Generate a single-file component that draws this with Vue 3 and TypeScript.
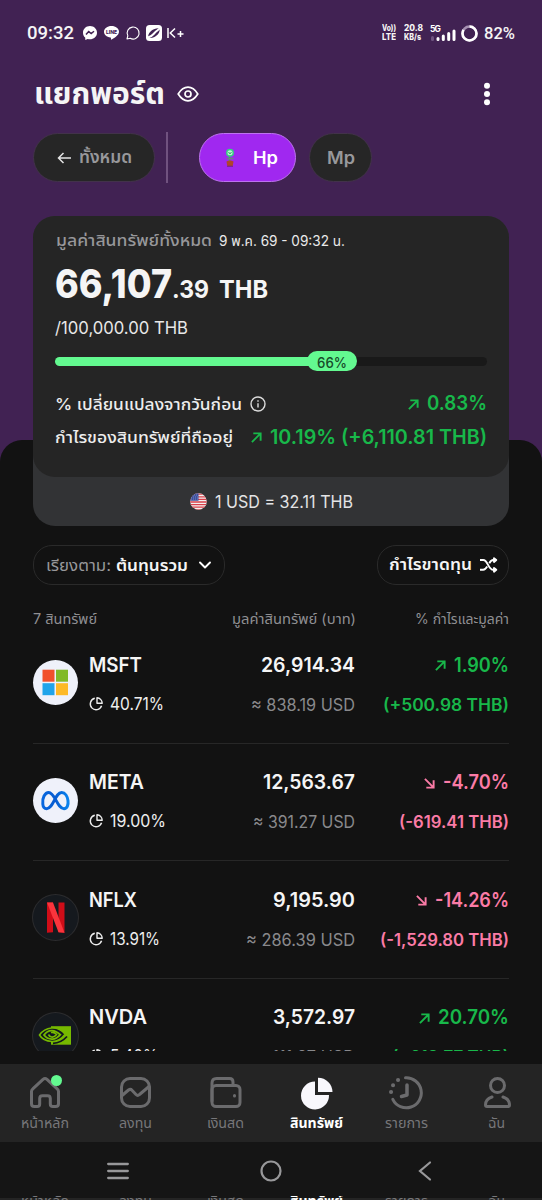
<script setup lang="ts">
import type { Directive } from 'vue'

interface Asset {
  symbol: string
  symbolW: number
  share: string
  shareW: number
  value: string
  valueW: number
  usd: string
  usdW: number
  change: string
  changeW: number
  profit: string
  profitW: number
  up: boolean
}

interface Tab {
  id: string
  label: string
  width: number
}

// Condenses or widens a label so that it fills exactly the given width.
const vFit: Directive<HTMLElement, number> = {
  mounted(el, { value }) {
    const natural = el.getBoundingClientRect().width
    if (!natural) return
    el.style.transform = `scaleX(${value / natural})`
    el.style.marginRight = `${value - natural}px`
  },
}

const assets: Asset[] = [
  { symbol: 'MSFT', symbolW: 53, share: '40.71%', shareW: 54, value: '26,914.34', valueW: 94, usd: '≈ 838.19 USD', usdW: 104, change: '1.90%', changeW: 55, profit: '(+500.98 THB)', profitW: 126, up: true },
  { symbol: 'META', symbolW: 55, share: '19.00%', shareW: 56, value: '12,563.67', valueW: 92, usd: '≈ 391.27 USD', usdW: 102, change: '-4.70%', changeW: 66, profit: '(-619.41 THB)', profitW: 110, up: false },
  { symbol: 'NFLX', symbolW: 48, share: '13.91%', shareW: 50, value: '9,195.90', valueW: 82, usd: '≈ 286.39 USD', usdW: 109, change: '-14.26%', changeW: 74, profit: '(-1,529.80 THB)', profitW: 129, up: false },
  { symbol: 'NVDA', symbolW: 58, share: '5.40%', shareW: 48, value: '3,572.97', valueW: 82, usd: '≈ 111.27 USD', usdW: 98, change: '20.70%', changeW: 71, profit: '(+612.77 THB)', profitW: 117, up: true },
]

const tabs: Tab[] = [
  { id: 'home', label: 'หน้าหลัก', width: 48 },
  { id: 'invest', label: 'ลงทุน', width: 33 },
  { id: 'cash', label: 'เงินสด', width: 37 },
  { id: 'assets', label: 'สินทรัพย์', width: 53 },
  { id: 'history', label: 'รายการ', width: 43 },
  { id: 'me', label: 'ฉัน', width: 17 },
]

const progress = 66
</script>

<template>
  <main class="screen">
    <div class="top">
      <header class="status">
        <span v-fit="47" class="fit clock">09:32</span>
        <svg class="s-msg" viewBox="0 0 14 14"><path d="M7 0C3 0 0 2.900 0 6.700c0 2 .8 3.700 2.200 4.900L2.300 14l2.400-1c4.600 1.200 9.300-1.500 9.300-6.300C14 2.900 11 0 7 0Z" fill="#fff" /><path d="m3 8.600 2.700-3 2.500 2L11 5.200" fill="none" stroke="#412253" stroke-width="1.500" /></svg>
        <svg class="s-line" viewBox="0 0 15 14"><path d="M7.500 0C3.300 0 0 2.500 0 5.800c0 2.900 2.600 5.200 6.500 5.700.8.200.3 1.500.5 2.300C9.500 12.500 15 9.500 15 5.800 15 2.500 11.700 0 7.500 0Z" fill="#fff" /><text x="7.500" y="7.700" text-anchor="middle" font-size="5" font-weight="800" fill="#412253">LINE</text></svg>
        <svg class="s-chat" viewBox="0 0 14 14"><path d="m1 13 .8-3.200A6 6 0 1 1 4.200 12.300Z" fill="none" stroke="#fff" stroke-width="1.100" stroke-linejoin="round" /></svg>
        <svg class="s-app" viewBox="0 0 16 16"><rect width="16" height="16" rx="3.500" fill="#fff" /><path d="M2.500 12.800C1 9 5.500 3 13.300 3.200 15 7 10 13.800 2.500 12.800Z" fill="#412253" /><path d="M2 12.500C6 11.500 7 9.500 9 7.500s3.500-2.500 5-4.500" fill="none" stroke="#fff" stroke-width="2" /></svg>
        <svg class="s-k" viewBox="0 0 17 10"><path d="M1 0v10M8 .5 3.300 5 8 9.500M10.500 6h6M13.500 3v6" fill="none" stroke="#fff" stroke-width="1.500" /></svg>
        <div class="status-right">
          <div class="mini"><span v-fit="14" class="fit">Vo))</span><span v-fit="14" class="fit">LTE</span></div>
          <div class="mini rate"><span v-fit="19" class="fit">20.8</span><span v-fit="17" class="fit">KB/s</span></div>
          <svg class="signal" viewBox="0 0 26 18"><text x="0" y="7.500" font-size="8.500" font-weight="700" fill="#fff" textLength="11">5G</text><g stroke-width="3" stroke-linecap="round"><path d="M2.500 13.500v2" stroke="#6f5580" /><path d="M8 14.500v1M13.300 12v3.500M18.700 9.500v6M24 7v8.500" stroke="#fff" /></g></svg>
          <svg class="battery" viewBox="0 0 17 17"><circle cx="8.500" cy="8.500" r="7" fill="none" stroke="#a690b2" stroke-width="2.600" /><circle cx="8.500" cy="8.500" r="7" fill="none" stroke="#fff" stroke-width="2.600" stroke-dasharray="36.500 8" transform="rotate(-90 8.500 8.500)" /></svg>
          <span v-fit="31" class="fit clock pct">82%</span>
        </div>
      </header>

      <div class="title-row">
        <h1 v-fit="131" class="fit">แยกพอร์ต</h1>
        <svg class="eye" viewBox="0 0 22 16" fill="none" stroke="#fff" stroke-width="1.700"><path d="M1.200 8C4 3.500 7.500 1.200 11 1.200S18 3.500 20.800 8C18 12.500 14.500 14.800 11 14.800S4 12.500 1.200 8Z" /><circle cx="11" cy="8" r="3" /></svg>
        <svg class="dots" viewBox="0 0 8 24" fill="#fff"><circle cx="4" cy="3.700" r="3" /><circle cx="4" cy="12" r="3" /><circle cx="4" cy="20.300" r="3" /></svg>
      </div>

      <div class="ports">
        <button class="port back">
          <svg viewBox="0 0 14 12" fill="none" stroke="#e4e4e4" stroke-width="1.500"><path d="M14 6H1.500M6.500 1l-5 5 5 5" /></svg>
          <span v-fit="53" class="fit">ทั้งหมด</span>
        </button>
        <i class="divider"></i>
        <button class="port active">
          <svg viewBox="0 0 12 20"><path d="M5.500 8v5" stroke="#42a866" stroke-width="1.500" /><path d="M2.500 10.500h7" stroke="#6b7f86" stroke-width="1.600" /><circle cx="6" cy="4.700" r="4" fill="#35cf83" /><circle cx="6" cy="4.700" r="2.500" fill="#baf4d2" /><path d="M4.500 4.500q1.500 2 3 0" stroke="#178452" fill="none" /><path d="M2.500 13.500q3.500-2 7 0l-.8 4.500H3.300Z" fill="#b0452a" /><path d="M3 18.300h6" stroke="#7b238d" stroke-width="1.200" /></svg>
          <span v-fit="25" class="fit">Hp</span>
        </button>
        <button class="port plain"><span v-fit="28" class="fit">Mp</span></button>
      </div>

      <section class="card">
        <div class="summary">
          <div class="caption"><span v-fit="156" class="fit muted">มูลค่าสินทรัพย์ทั้งหมด</span><span v-fit="126" class="fit date">9 พ.ค. 69 - 09:32 น.</span></div>
          <div class="total"><span v-fit="117" class="fit big">66,107</span><span v-fit="37" class="fit small">.39</span><span v-fit="49" class="fit small unit">THB</span></div>
          <div class="goal"><span v-fit="133" class="fit">/100,000.00 THB</span></div>
          <div class="track"><div class="bar" :style="{ width: progress + '%' }"></div><span class="badge"><span v-fit="30" class="fit">66%</span></span></div>
          <div class="stat">
            <span v-fit="187" class="fit">% เปลี่ยนแปลงจากวันก่อน</span>
            <svg class="info" viewBox="0 0 16 16" fill="none" stroke="#ddd" stroke-width="1.400"><circle cx="8" cy="8" r="7" /><path d="M8 7.200v4.300M8 4.200v1.600" /></svg>
            <svg class="arrow gain" viewBox="0 0 12 12"><path d="M1 11 10.500 1.500M2.500 1.500h8v8" /></svg>
            <b v-fit="60" class="fit up">0.83%</b>
          </div>
          <div class="stat second">
            <span v-fit="178" class="fit">กำไรของสินทรัพย์ที่ถืออยู่</span>
            <svg class="arrow gain" viewBox="0 0 12 12"><path d="M1 11 10.500 1.500M2.500 1.500h8v8" /></svg>
            <b v-fit="217" class="fit up">10.19% (+6,110.81 THB)</b>
          </div>
        </div>
        <div class="rate-row">
          <svg viewBox="0 0 17 17"><clipPath id="flag"><circle cx="8.500" cy="8.500" r="8.300" /></clipPath><g clip-path="url(#flag)"><path fill="#f5f0f0" d="M0 0h17v17H0z" /><path d="M0 1.200h17M0 3.800h17M0 6.400h17M0 9h17M0 11.600h17M0 14.200h17M0 16.800h17" stroke="#d9414b" stroke-width="1.300" /><path fill="#3c4f9c" d="M0 0h8.500v7.700H0z" /><path d="M2 2h6M1 4h7M1 6h7" stroke="#a6b2dc" stroke-width=".7" stroke-dasharray=".8 1.200" /></g></svg>
          <span v-fit="138" class="fit">1 USD = 32.11 THB</span>
        </div>
      </section>
    </div>

    <section class="sheet">
      <div class="filters">
        <button class="chip sort">
          <span v-fit="65" class="fit dim">เรียงตาม:</span>
          <b v-fit="72" class="fit">ต้นทุนรวม</b>
          <svg viewBox="0 0 12 8" fill="none" stroke="#fff" stroke-width="1.900" stroke-linecap="round" stroke-linejoin="round"><path d="m1 1.500 5 5 5-5" /></svg>
        </button>
        <button class="chip profit">
          <b v-fit="83" class="fit">กำไรขาดทุน</b>
          <svg viewBox="0 0 18 14" fill="none" stroke="#fff" stroke-width="1.900" stroke-linejoin="round"><path d="M0 2h3.200c4.800 0 5 9.800 10 9.800H16M0 11.800h3.200c2 0 3-1.500 4-3.200M9.300 5.200C10.300 3.300 11.300 2 13.200 2H16" /><path d="M14 .2 16.300 2 14 3.900ZM14 10 16.300 11.800 14 13.700Z" fill="#fff" /></svg>
        </button>
      </div>

      <div class="columns">
        <span><i v-fit="64" class="fit">7 สินทรัพย์</i></span>
        <span><i v-fit="124" class="fit">มูลค่าสินทรัพย์ (บาท)</i></span>
        <span><i v-fit="94" class="fit">% กำไรและมูลค่า</i></span>
      </div>

      <div class="list">
        <article v-for="a in assets" :key="a.symbol" class="row">
          <div class="logo" :class="a.symbol.toLowerCase()">
            <svg v-if="a.symbol === 'MSFT'" viewBox="0 0 45 45"><path fill="#f1502b" d="M9.500 9.700h12v12h-12z" /><path fill="#80b928" d="M23 9.700h12v12H23z" /><path fill="#20a4ea" d="M9.500 23.200h12v12h-12z" /><path fill="#fdb927" d="M23 23.200h12v12H23z" /></svg>
            <svg v-else-if="a.symbol === 'META'" viewBox="0 0 45 45"><defs><linearGradient id="meta"><stop stop-color="#0867df" /><stop offset=".5" stop-color="#075bd0" /><stop offset="1" stop-color="#0a83ee" /></linearGradient></defs><path d="M9.800 26C8.900 20 12 14.500 15.700 14.500c6.200 0 8.600 16.200 15.300 16.200 6.600 0 4.800-16.200-2.300-16.200-6.500 0-8.500 16.200-15 16.200-2.300 0-3.700-2-3.900-4.700Z" fill="none" stroke="url(#meta)" stroke-width="3" /></svg>
            <svg v-else-if="a.symbol === 'NFLX'" viewBox="0 0 45 45"><path fill="#cf0d18" d="M14 7.500h6v29.800l-6 .5zM25.500 7.500h6v30.300l-6-.5z" /><path fill="#fa343c" d="M14 7.500h6l11.500 30.300-6-.5z" /></svg>
            <svg v-else viewBox="0 0 45 45"><path fill="#76b900" d="M18 13.200h20v18.500H18z" /><path d="M6.500 22C10 17 14 15.400 18.500 15c6-.5 11 3 13.700 6.200-3.200 4-8 7.500-13.200 7.300C13 28.200 8.500 25.500 6.500 22Z" fill="#111820" stroke="#76b900" stroke-width="1.600" /><path d="M11 22c2.500-3.500 5-4.600 8-4.400 4 .2 6.500 2.400 8.300 4-2.300 2.600-5 4.700-8.300 4.500-4-.2-6.500-2-8-4.100Z" fill="none" stroke="#76b900" stroke-width="1.900" /><path d="M18 19.500c2.500-.5 4.500.7 5.500 2-1.500 2-3 3-5 2.500-2-.4-2.500-1.500-3-2.500" fill="none" stroke="#76b900" stroke-width="1.700" /><path d="M20 30.300c6.500-.3 11-3.500 14-6.800" fill="none" stroke="#111820" stroke-width="1.800" /></svg>
          </div>
          <div class="name">
            <strong><span v-fit="a.symbolW" class="fit">{{ a.symbol }}</span></strong>
            <div class="share">
              <svg viewBox="0 0 14 14" fill="none" stroke="#eee" stroke-width="1.400" stroke-linejoin="round"><path d="M5.800 1.300A5.800 5.800 0 1 0 12.600 8.800M8 .8v5.500h5.200A5.700 5.700 0 0 0 8 .8Z" /></svg>
              <span v-fit="a.shareW" class="fit">{{ a.share }}</span>
            </div>
          </div>
          <div class="amount">
            <strong><span v-fit="a.valueW" class="fit">{{ a.value }}</span></strong>
            <div><span v-fit="a.usdW" class="fit">{{ a.usd }}</span></div>
          </div>
          <div class="change" :class="a.up ? 'gain' : 'loss'">
            <strong>
              <svg class="arrow" viewBox="0 0 12 12"><path v-if="a.up" d="M1 11 10.500 1.500M2.500 1.500h8v8" /><path v-else d="M1 1l9.500 9.500M2.500 10.500h8v-8" /></svg>
              <span v-fit="a.changeW" class="fit">{{ a.change }}</span>
            </strong>
            <div><span v-fit="a.profitW" class="fit">{{ a.profit }}</span></div>
          </div>
        </article>
      </div>
    </section>

    <nav class="tabs">
      <a v-for="t in tabs" :key="t.id" class="tab" :class="{ on: t.id === 'assets' }">
        <svg viewBox="0 0 36 36" fill="none" stroke="#6b6b6d" stroke-width="3" stroke-linecap="round" stroke-linejoin="round">
          <g v-if="t.id === 'home'"><path d="M4.500 17.500c0-1 .5-2 1.300-2.700L16 5.300c1.200-1 2.800-1 4 0l10.200 9.500c.8.700 1.300 1.700 1.300 2.700v12.200c0 1.800-1 2.800-2.800 2.800h-2.900c-1.700 0-2.500-1-2.500-2.500v-5.500c0-1.800-1-2.800-2.800-2.800h-5c-1.800 0-2.800 1-2.800 2.800V30c0 1.500-.8 2.500-2.500 2.500H7.300c-1.800 0-2.800-1-2.800-2.800Z" /></g>
          <g v-else-if="t.id === 'invest'"><rect x="4.500" y="4.500" width="28" height="28" rx="8.500" /><path d="m4.500 22 7-6c1.500-1 2.500-.8 3.500.3l4 4.200c1.200 1.200 2.200 1.200 3.500 0l9.500-8" /></g>
          <g v-else-if="t.id === 'cash'"><rect x="4" y="11.500" width="28" height="21" rx="4" /><path d="M4 27V9c0-3 1.500-4.500 4.500-4.500h13c2.500 0 3.500 1 3.500 3.500v3M26.500 21.500v.5" /></g>
          <g v-else-if="t.id === 'assets'" fill="#f8f7fc" stroke="none"><path d="M17 7.500V21h14A14 14 0 1 1 17 7.500Z" /><path d="M20 3.700c8 0 14.500 6.300 14.500 14.300H20Z" /></g>
          <g v-else-if="t.id === 'history'"><path d="M17.500 3.800a15 15 0 1 1-12.700 21.500" /><path d="M19 11v10l-5.500 1.500" stroke-width="3.500" /><path d="M10 6h.1M5 11.200h.1M3 18h.1" stroke-width="4" /></g>
          <g v-else><circle cx="18.500" cy="11.500" r="7" /><path d="M13 23c-4 1.300-6.500 4.300-6.500 8 0 1 .5 1.500 1.500 1.500h21c1 0 1.500-.5 1.500-1.500 0-3.700-2.500-6.700-6.500-8" /></g>
        </svg>
        <i v-if="t.id === 'home'" class="dot"></i>
        <span v-fit="t.width" class="fit">{{ t.label }}</span>
      </a>
    </nav>

    <div class="system">
      <svg viewBox="0 0 22 18" stroke="#98989a" stroke-width="2.300" stroke-linecap="round"><path d="M1.200 2h19.600M1.200 9h19.600M1.200 16h19.600" /></svg>
      <svg viewBox="0 0 22 22" fill="none" stroke="#98989a" stroke-width="2.200"><circle cx="11" cy="11" r="9.500" /></svg>
      <svg viewBox="0 0 14 20" fill="none" stroke="#98989a" stroke-width="2.200" stroke-linecap="round"><path d="M12 1.500 2 10l10 8.500" /></svg>
    </div>

    <div class="echo">
      <span v-for="t in tabs" :key="t.id" :class="{ on: t.id === 'assets' }"><i v-fit="t.width" class="fit">{{ t.label }}</i></span>
    </div>
  </main>
</template>

<style>
html, body { margin: 0; background: #121212; overflow: hidden; }
</style>

<style scoped>
* { box-sizing: border-box; }
.screen {
  width: 542px;
  height: 1200px;
  overflow: hidden;
  display: flex;
  flex-direction: column;
  background: #412253;
  color: #f5f5f5;
  font-family: Inter, "Noto Sans Thai", "Noto Sans", sans-serif;
}
svg { display: block; flex: none; overflow: visible; }
i { font-style: normal; }
.fit { display: inline-block; white-space: nowrap; transform-origin: left center; flex: none; }
.top { height: 440px; flex: none; position: relative; z-index: 1; }

.status { display: flex; align-items: center; height: 66px; padding: 0 27px; }
.clock { font: 500 18.5px/22px Roboto, sans-serif; }
.s-msg { width: 14px; height: 14px; margin-left: 9px; }
.s-line { width: 15px; height: 14px; margin-left: 7px; }
.s-chat { width: 14px; height: 14px; margin-left: 7px; }
.s-app { width: 16px; height: 16px; margin-left: 6px; }
.s-k { width: 17px; height: 10px; margin-left: 5px; }
.status-right { display: flex; align-items: center; margin-left: auto; }
.mini { display: flex; flex-direction: column; align-items: flex-start; font: 800 8.5px/9.5px Inter, sans-serif; }
.mini.rate { margin-left: 8px; }
.signal { width: 26px; height: 18px; margin-left: 7px; }
.battery { width: 17px; height: 17px; margin: 0 6px 0 5px; }
.pct { font-size: 17px; }

.title-row { display: flex; align-items: center; height: 56px; padding: 0 51px 0 34px; }
h1 { margin: -2px 0 0; font-size: 30px; line-height: 40px; font-weight: 700; }
.eye { width: 22px; height: 16px; margin-left: 12px; }
.dots { width: 8px; height: 24px; margin-left: auto; }

.ports { display: flex; align-items: center; height: 51px; margin-top: 10px; padding-left: 33px; }
.port {
  display: flex; align-items: center; height: 49px; padding: 0;
  border: 1.5px solid #42324a; border-radius: 25px;
  background: #262626; color: #98989b; font: inherit; font-weight: 600; font-size: 17px; line-height: 24px;
}
.back { width: 122px; padding-left: 23px; gap: 8px; }
.back svg { width: 14px; height: 12px; }
.back .fit { margin-top: -2px; }
.divider { width: 2px; height: 51px; margin: 0 31px 0 11px; background: #70527f; }
.active { width: 97px; padding-left: 24px; gap: 18px; background: #a028f0; border-color: #bd72ef; color: #fff; }
.active svg { width: 12px; height: 20px; }
.active .fit { margin-left: -1px; }
.plain { width: 63px; margin-left: 13px; justify-content: center; }

.card { width: 476px; margin: 33px 0 0 33px; border-radius: 22px; background: #323335; }
.summary { height: 261px; padding: 11px 22px 0; border-radius: 22px; background: #252525; }
.caption { display: flex; align-items: center; height: 26px; line-height: 24px; }
.muted { font-size: 16.5px; font-weight: 500; color: #97979a; margin-left: 1px; }
.date { font-size: 14px; margin-left: 7px; margin-top: 2px; color: #eaeaea; }
.total { display: flex; align-items: baseline; height: 60px; margin-top: 1px; line-height: 60px; font-weight: 800; }
.big { font-size: 39px; }
.small { font-size: 24.5px; font-weight: 700; }
.unit { margin-left: 10px; }
.goal { font-size: 17px; line-height: 26px; margin-top: 1px; color: #e8e8e8; }
.track { position: relative; display: flex; align-items: center; height: 9px; margin: 15.5px 0 0; border-radius: 5px; background: #191919; }
.bar { height: 9px; border-radius: 5px; background: #63f990; }
.badge { display: flex; align-items: center; justify-content: center; width: 50px; height: 20px; margin-left: -33px; padding-top: 2px; border-radius: 10px; background: #63f990; color: #174b2a; font-size: 14px; font-weight: 500; }
.stat { display: flex; align-items: center; height: 32px; margin-top: 21.5px; font-size: 16px; font-weight: 500; line-height: 28px; color: #ededed; }
.stat > .fit:first-child { margin-top: 1px; }
.stat.second { margin-top: 1.5px; }
.info { width: 16px; height: 16px; margin-left: 8px; margin-top: 1px; }
.arrow { width: 11px; height: 11px; margin-top: 2px; fill: none; stroke: currentColor; stroke-width: 2.1; }
.stat .arrow { margin-left: auto; margin-right: 8px; }
.up { font-size: 20px; font-weight: 600; color: #18b84a; }
.gain { color: #18b84a; }
.loss { color: #fb7ba6; }
.rate-row { display: flex; align-items: center; justify-content: center; height: 49px; gap: 8px; font-size: 17px; color: #e4e4e5; }
.rate-row svg { width: 17px; height: 17px; }

.sheet { flex: none; height: 624px; padding: 105px 33px 0; border-radius: 22px 22px 0 0; background: #121212; }
.filters { display: flex; justify-content: space-between; height: 40px; }
.chip { display: flex; align-items: center; height: 40px; padding: 0 0 0 12px; border: 1.5px solid #2a2a2a; border-radius: 19px; background: #121212; color: #f5f5f5; font: inherit; font-size: 16px; line-height: 24px; }
.chip b { font-weight: 600; }
.sort { width: 192px; }
.sort b { margin-left: 5px; }
.sort svg { width: 12px; height: 8px; margin-left: 11px; }
.dim { color: #98989b; font-weight: 400; }
.profit { width: 132px; padding-left: 11px; }
.profit b { margin-top: -2px; }
.profit svg { width: 18px; height: 14px; margin-left: 8px; }

.columns { display: grid; grid-template-columns: 1fr 160px 153.5px; height: 41px; padding-top: 22px; font-size: 14px; line-height: 24px; color: #8f8f92; }
.columns span { display: flex; }
.columns span + span { justify-content: flex-end; }

.list { height: 425px; overflow: hidden; margin: 0 -2px; padding: 0 2px; }
.row { display: grid; grid-template-columns: 56px 1fr 130px 153.5px; height: 117.5px; padding-top: 25.5px; border-bottom: 1.5px solid #272727; }
.row strong, .row .share, .amount div, .change div { display: flex; align-items: center; }
.row strong { height: 26px; font-size: 20px; line-height: 26px; font-weight: 600; }
.logo { width: 45px; height: 45px; margin-top: 8.5px; border-radius: 50%; background: #eff1fa; }
.nflx, .nvda { background: #15191e; box-shadow: 0 0 0 1px #2c2c2e; }
.logo svg { width: 45px; height: 45px; }
.name strong { margin-left: -.5px; }
.share { height: 26px; margin-top: 13px; font-size: 17px; color: #eee; gap: 7px; }
.share svg { width: 14px; height: 14px; }
.amount { margin-left: -.5px; margin-right: .5px; }
.amount strong, .amount div, .change strong, .change div { justify-content: flex-end; }
.amount div, .change div { height: 26px; margin-top: 14px; font-size: 17px; }
.amount div { color: #89898c; }
.change { margin-right: .5px; }
.change div { font-weight: 600; }
.change .arrow { margin-right: 8px; }

.tabs, .echo { display: grid; grid-template-columns: repeat(6, 1fr); flex: none; }
.tabs { height: 78px; background: #242424; z-index: 1; }
.tab { position: relative; display: flex; flex-direction: column; align-items: center; padding-top: 10px; color: #77777a; font-size: 14px; line-height: 24px; }
.tab svg { width: 36px; height: 36px; }
.tab .fit { margin-top: 1px; }
.on { color: #fff; font-weight: 700; }
.dot { position: absolute; left: 51px; top: 11px; width: 11px; height: 11px; border-radius: 50%; background: #63f990; }
.system { display: grid; grid-template-columns: 153px 154px 153px; justify-content: center; justify-items: center; align-items: center; height: 54px; padding-top: 4px; flex: none; background: #151515; z-index: 1; }
.system svg:nth-child(1) { width: 22px; height: 18px; }
.system svg:nth-child(2) { width: 22px; height: 22px; }
.system svg:nth-child(3) { width: 14px; height: 20px; }
.echo { height: 4px; overflow: hidden; background: linear-gradient(#151515 2px, #242424 2px); color: #77777a; font-size: 14px; line-height: 24px; }
.echo span { display: flex; justify-content: center; height: 24px; margin-top: -7px; }
</style>
